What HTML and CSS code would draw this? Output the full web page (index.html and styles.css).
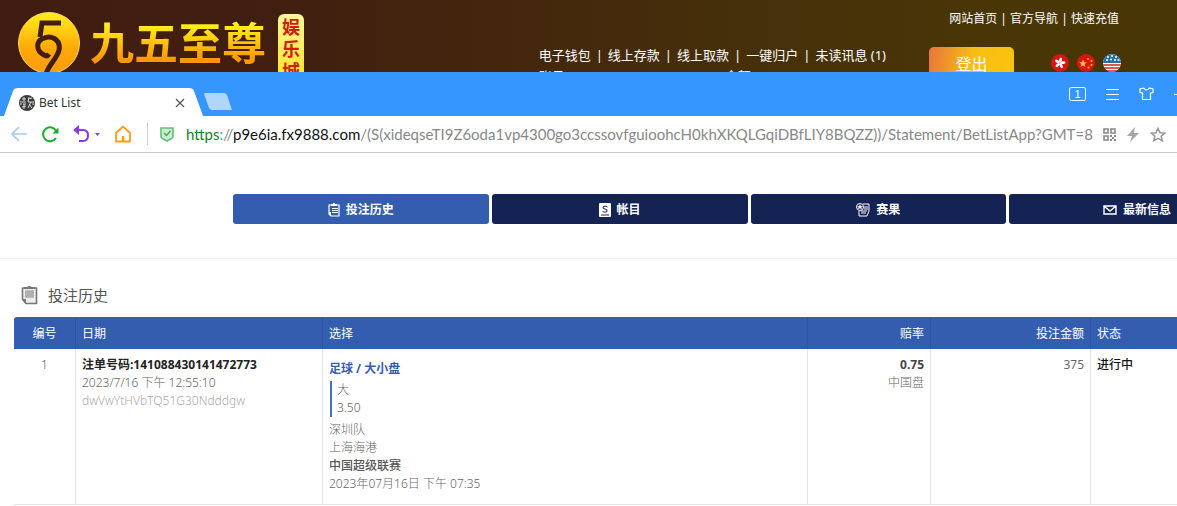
FILE: index.html
```html
<!DOCTYPE html>
<html lang="zh-CN">
<head>
  <meta charset="UTF-8" />
  <meta name="viewport" content="width=device-width, initial-scale=1" />
  <title>Bet List</title>
  <link rel="stylesheet" href="styles.css">
</head>
<body>
  <!-- Site header -->
  <header class="site-header">
    <div class="logo">
      <svg class="logo-mark" width="64" height="64" viewBox="0 0 64 64" aria-hidden="true">
        <defs>
          <linearGradient id="gold" x1="0" y1="0" x2="0" y2="1">
            <stop offset="0" stop-color="#ffef1c" />
            <stop offset="0.6" stop-color="#ffa808" />
            <stop offset="1" stop-color="#ff9a10" />
          </linearGradient>
        </defs>
        <circle cx="31" cy="32" r="30.5" fill="url(#gold)" stroke="#ffd65a" stroke-width="1" />
        <path d="M43 12H24L22 26" fill="none" stroke="#421d10" stroke-width="5" />
        <path d="M31 43Q29 46 26 44C18 40 18 31 24 28C32 23 43 28 41 39C39 48 31 53 28 63" fill="none" stroke="#421d10" stroke-width="5" />
      </svg>
      <span class="logo-name">九五至尊</span>
      <span class="logo-badge">娱乐城</span>
    </div>
    <div class="header-right">
      <nav class="top-links">
        <a href="#">网站首页</a> | <a href="#">官方导航</a> | <a href="#">快速充值</a>
      </nav>
      <div class="account-row">
        <div class="account">
          <nav class="account-links">
            <a href="#">电子钱包</a><span>|</span><a href="#">线上存款</a><span>|</span><a href="#">线上取款</a><span>|</span><a href="#">一键归户</a><span>|</span><a href="#">未读讯息 (1)</a>
          </nav>
          <div class="account-info"><span>账号</span><span>余额</span></div>
        </div>
        <button class="logout" type="button">登出</button>
        <div class="flags">
          <a href="#" aria-label="香港">
            <svg width="18" height="18" viewBox="0 0 18 18">
              <circle cx="9" cy="9" r="9" fill="#d91512" />
              <g fill="#fff">
                <ellipse cx="9" cy="6" rx="1.4" ry="2.6" transform="rotate(12 9 9)" />
                <ellipse cx="9" cy="6" rx="1.4" ry="2.6" transform="rotate(84 9 9)" />
                <ellipse cx="9" cy="6" rx="1.4" ry="2.6" transform="rotate(156 9 9)" />
                <ellipse cx="9" cy="6" rx="1.4" ry="2.6" transform="rotate(228 9 9)" />
                <ellipse cx="9" cy="6" rx="1.4" ry="2.6" transform="rotate(300 9 9)" />
              </g>
            </svg>
          </a>
          <a href="#" aria-label="中国">
            <svg width="18" height="18" viewBox="0 0 18 18">
              <circle cx="9" cy="9" r="9" fill="#d91512" />
              <g fill="#ffc83d">
                <path d="M6 5.5L7 8.3H10L7.6 10L8.5 13L6 11.2L3.5 13L4.4 10L2 8.3H5Z" />
                <circle cx="11" cy="5" r="1" />
                <circle cx="14.500" cy="7" r="1" />
                <circle cx="14.500" cy="11" r="1" />
                <circle cx="11.500" cy="13.500" r="1" />
              </g>
            </svg>
          </a>
          <a href="#" aria-label="English">
            <svg width="18" height="18" viewBox="0 0 18 18">
              <clipPath id="round"><circle cx="9" cy="9" r="9" /></clipPath>
              <g clip-path="url(#round)">
                <rect width="18" height="18" fill="#fff" />
                <rect width="18" height="9" fill="#2372a8" />
                <path d="M0 11H18M0 14H18M0 17H18" stroke="#d8201c" stroke-width="1.500" />
                <path d="M4 3h2M8 2h2M12 3h2M3 6h2M7 5.500h2M11 6h2M14.500 6h2" stroke="#fff" stroke-width="1.500" />
              </g>
            </svg>
          </a>
        </div>
      </div>
    </div>
  </header>

  <!-- Browser window -->
  <div class="browser">
    <div class="tab-strip">
      <div class="tab">
        <svg class="tab-shape" viewBox="0 0 199 28" preserveAspectRatio="none" aria-hidden="true">
          <path d="M0 28L9 3Q10 0 14 0H185Q189 0 190 3L199 28Z" fill="#fff" />
        </svg>
        <svg width="16" height="16" viewBox="0 0 16 16" aria-hidden="true">
          <circle cx="8" cy="8" r="8" fill="#3c3c3c" />
          <path d="M3 4H7M5 2V6M3 7H7M4 9H7M5 9V14M3 12L7 11M9 4L13 3M10 2L9 7M9 7H13M12 7L9 13M10 9L13 13M2 10V6M14 6V10" stroke="#ddd" fill="none" />
        </svg>
        <span class="tab-title">Bet List</span>
        <button class="icon-btn" type="button" aria-label="Close tab">
          <svg width="10" height="10" viewBox="0 0 10 10"><path d="M1 1L9 9M9 1L1 9" stroke="#555" stroke-width="1.200" /></svg>
        </button>
      </div>
      <button class="icon-btn new-tab" type="button" aria-label="New tab">
        <svg width="28" height="17" viewBox="0 0 28 17"><path d="M1 0H20Q22 0 23 2L28 17H8Q6 17 5 15L0 1Z" fill="#b0d6fd" /></svg>
      </button>
      <div class="window-tools">
        <button class="icon-btn" type="button"><span class="window-count">1</span></button>
        <button class="icon-btn" type="button" aria-label="Menu">
          <svg width="13" height="12" viewBox="0 0 13 12"><path d="M0 1.500H13M0 6.500H13M0 11.500H13" stroke="#fff" /></svg>
        </button>
        <button class="icon-btn" type="button" aria-label="Skins">
          <svg width="15" height="14" viewBox="0 0 15 14"><path d="M4.500 1L1 2V5.500L3.500 6V12.500H11.500V6L14 5.500V2L10.500 1Q7.500 5 4.500 1Z" fill="none" stroke="#fff" stroke-width="1.200" /></svg>
        </button>
        <button class="icon-btn" type="button" aria-label="Minimize">
          <svg width="12" height="12" viewBox="0 0 12 12"><path d="M0 6.500H12" stroke="#fff" /></svg>
        </button>
      </div>
    </div>

    <div class="toolbar">
      <button class="icon-btn" type="button" aria-label="Back">
        <svg width="16" height="16" viewBox="0 0 16 16"><path d="M16 8H1M8 1L1 8L8 15" fill="none" stroke="#a5cbf3" stroke-width="1.600" /></svg>
      </button>
      <button class="icon-btn" type="button" aria-label="Reload">
        <svg width="18" height="18" viewBox="0 0 18 18"><path d="M15 13A7 7 0 1 1 15.300 6" fill="none" stroke="#16ad2c" stroke-width="2" /><path d="M17.500 2.500V8.500H11.500Z" fill="#16ad2c" /></svg>
      </button>
      <button class="icon-btn" type="button" aria-label="Undo">
        <svg width="28" height="18" viewBox="0 0 28 18"><path d="M3 5H10Q15 5 15 10.500Q15 16 10 16H6" fill="none" stroke="#8a3be0" stroke-width="2" /><path d="M0 5L6 0V10Z" fill="#8a3be0" /><path d="M22 8H27L24.500 11Z" fill="#8a3be0" /></svg>
      </button>
      <button class="icon-btn" type="button" aria-label="Home">
        <svg width="16" height="18" viewBox="0 0 16 18"><path d="M1 8L8 1.500L15 8V16.500H1Z" fill="none" stroke="#ff9c1a" stroke-width="1.800" stroke-linejoin="round" /><path d="M8 16V11" stroke="#ff9c1a" stroke-width="2.500" /></svg>
      </button>
      <div class="address">
        <svg width="14" height="16" viewBox="0 0 14 16" aria-hidden="true"><path d="M1 2H13V11Q13 12 7 15Q1 12 1 11Z" fill="#c8efcf" stroke="#63bd75" stroke-width="1.600" /><path d="M4 7L6.500 9.500L10.500 5" fill="none" stroke="#44a85a" stroke-width="1.500" /></svg>
        <div class="url" role="textbox" contenteditable="true" spellcheck="false" aria-label="Address"><span class="url-scheme">https</span>://<span class="url-host">p9e6ia.fx9888.com</span>/(S(xideqseTI9Z6oda1vp4300go3ccssovfguioohcH0khXKQLGqiDBfLIY8BQZZ))/Statement/BetListApp?GMT=8</div>
      </div>
      <div class="page-tools">
        <button class="icon-btn" type="button" aria-label="QR code">
          <svg width="13" height="13" viewBox="0 0 13 13"><path d="M1 1H5V5H1ZM8 1H12V5H8ZM1 8H5V12H1Z" fill="none" stroke="#888" stroke-width="1.600" /><path d="M7 7H9V9H7ZM11 7H13V9H11ZM9 9H11V11H9ZM7 11H9V13H7ZM11 11H13V13H11Z" fill="#888" /></svg>
        </button>
        <button class="icon-btn" type="button" aria-label="Speed mode">
          <svg width="12" height="15" viewBox="0 0 12 15"><path d="M8 0L0 9H5L3 15L12 6H7Z" fill="#a5a5a5" /></svg>
        </button>
        <button class="icon-btn" type="button" aria-label="Bookmark">
          <svg width="16" height="15" viewBox="0 0 16 15"><path d="M8 1.500L10 5.700L14.600 6.200L11.200 9.200L12.200 13.700L8 11.400L3.800 13.700L4.800 9.200L1.400 6.200L6 5.700Z" fill="none" stroke="#999" stroke-width="1.600" /></svg>
        </button>
      </div>
    </div>
  </div>

  <!-- Bet list page -->
  <main class="page">
    <nav class="menu">
      <a class="menu-item active" href="#">
        <svg width="12" height="14" viewBox="0 0 12 14" aria-hidden="true"><path d="M3 2H1V11L3 13H11V2H9" fill="none" stroke="#fff" stroke-width="1.200" /><path d="M3 3V1H5V0H7V1H9V3ZM4 5H10V6H4ZM4 7H10V8H4ZM4 9H10V10H4ZM1 9H3V13H2L1 11Z" fill="#fff" /></svg>
        投注历史
      </a>
      <a class="menu-item" href="#">
        <svg width="12" height="14" viewBox="0 0 12 14" aria-hidden="true"><rect width="12" height="14" rx="1" fill="#fff" /><path d="M8.500 4Q6 2 4 4Q3.500 6 6 6Q9 6.500 8 8.500Q6 10 3.500 8.500M2 12H10" fill="none" stroke="#142254" /></svg>
        帐目
      </a>
      <a class="menu-item" href="#">
        <svg width="14" height="14" viewBox="0 0 14 14" aria-hidden="true"><path d="M7 1H13V8L11 13H3V8M8 4H12M8 6H12M5 8H11M5 10H10" fill="none" stroke="#fff" /><circle cx="4" cy="4" r="3.500" fill="none" stroke="#fff" /><path d="M4 1.500L5 3.300H7L5.300 4.500L6 6.500L4 5.300L2 6.500L2.700 4.500L1 3.300H3Z" fill="#fff" /></svg>
        赛果
      </a>
      <a class="menu-item" href="#">
        <svg width="14" height="10" viewBox="0 0 14 10" aria-hidden="true"><path d="M1 1H13V9H1ZM1 1L7 6L13 1" fill="none" stroke="#fff" stroke-width="1.400" /></svg>
        最新信息
      </a>
    </nav>

    <section class="history">
      <h1 class="history-title">
        <svg width="17" height="20" viewBox="0 0 17 20" aria-hidden="true"><path d="M3 3H1.500V14L5 18.500H15.500V3H14" fill="#eee" stroke="#777" stroke-width="1.600" stroke-linejoin="round" /><path d="M3 4V2H6Q8 0 11 2H14V4Z" fill="#777" /><path d="M4 5H13V13H4Z" fill="#bbb" /><path d="M4 7H13M4 9H13M4 11H13" stroke="#a2a2a2" /><path d="M1 14H5V19L1 15Z" fill="#777" /></svg>
        投注历史
      </h1>
      <table class="bets">
        <colgroup>
          <col class="col-no"><col class="col-date"><col class="col-pick"><col class="col-odds"><col class="col-stake"><col>
        </colgroup>
        <thead>
          <tr>
            <th class="center">编号</th>
            <th>日期</th>
            <th>选择</th>
            <th class="right">赔率</th>
            <th class="right">投注金额</th>
            <th>状态</th>
          </tr>
        </thead>
        <tbody>
          <tr>
            <td class="center">1</td>
            <td>
              <div class="ticket">注单号码:141088430141472773</div>
              <div>2023/7/16 下午 12:55:10</div>
              <div class="user">dwVwYtHVbTQ51G30Ndddgw</div>
            </td>
            <td class="pick">
              <div class="market">足球 / 大小盘</div>
              <div class="selection">
                <div>大</div>
                <div>3.50</div>
              </div>
              <div>深圳队</div>
              <div>上海海港</div>
              <div class="league">中国超级联赛</div>
              <div>2023年07月16日 下午 07:35</div>
            </td>
            <td class="right">
              <div class="odds">0.75</div>
              <div>中国盘</div>
            </td>
            <td class="right stake">375</td>
            <td class="status">进行中</td>
          </tr>
        </tbody>
      </table>
    </section>
  </main>
</body>
</html>
```
FILE: styles.css
```css
* {
  box-sizing: border-box;
}
body {
  margin: 0;
  background: #fff;
  font-family: "Noto Sans", "Noto Sans CJK SC", sans-serif;
  font-size: 12px;
  line-height: 18px;
  color: #666;
  overflow: hidden;
}
a {
  color: inherit;
  text-decoration: none;
}
svg {
  display: block;
  flex: none;
}
.icon-btn {
  display: flex;
  flex: none;
  padding: 0;
  border: none;
  background: none;
  cursor: pointer;
}

/* Site header */
.site-header {
  display: flex;
  justify-content: space-between;
  max-height: 72px;
  padding: 8px 56px 0 18px;
  overflow: hidden;
  background: linear-gradient(to right, #401c12, #42200f 28%, #46300a 65%, #493606 85%, #483605);
  color: #fff;
}
.logo {
  display: flex;
  align-items: flex-start;
}
.logo-mark {
  margin-top: 3px;
}
.logo-name {
  margin: 10px 12px 0 8px;
  font-family: "Noto Sans CJK SC", sans-serif;
  font-size: 44px;
  font-weight: 700;
  line-height: 46px;
  background: linear-gradient(#fff019 15%, #ff9800 90%);
  -webkit-background-clip: text;
  background-clip: text;
  color: transparent;
}
.logo-badge {
  width: 26px;
  margin-top: 6px;
  padding: 2px 4px;
  border-radius: 6px;
  background: linear-gradient(#fff79a, #ffe11e);
  color: #d0200c;
  font-size: 18px;
  font-weight: 700;
  line-height: 22px;
}
.header-right {
  display: flex;
  flex-direction: column;
  align-items: flex-end;
}
.top-links {
  padding-right: 2px;
  line-height: 22px;
}
.account-row {
  display: flex;
  align-items: flex-start;
  margin-top: 16px;
}
.account {
  margin-right: 43px;
  font-size: 13px;
  line-height: 18px;
}
.account-links {
  display: flex;
  gap: 5px;
}
.account-info {
  display: flex;
  gap: 160px;
  line-height: 24px;
}
.logout {
  width: 85px;
  height: 32px;
  margin-top: 1px;
  padding: 0;
  border: none;
  border-radius: 5px;
  background: linear-gradient(100deg, #e8743b, #f7bd17 50%, #fac40c);
  color: #fff;
  font-family: inherit;
  font-size: 16px;
}
.flags {
  display: flex;
  gap: 8px;
  margin: 8px 0 0 37px;
}

/* Browser window */
.tab-strip {
  display: flex;
  align-items: flex-end;
  height: 44px;
  padding-left: 4px;
  overflow: hidden;
  background: #3596ff;
}
.tab {
  position: relative;
  display: flex;
  align-items: center;
  width: 199px;
  height: 28px;
  padding: 2px 18px 0 15px;
  color: #333;
}
.tab-shape {
  position: absolute;
  inset: 0;
  width: 100%;
  height: 100%;
}
.tab > :not(.tab-shape) {
  z-index: 1;
}
.tab-title {
  flex: 1;
  margin-left: 4px;
}
.new-tab {
  margin: 0 0 6px 1px;
}
.window-tools {
  display: flex;
  align-items: center;
  gap: 20px;
  height: 44px;
  margin-left: auto;
  margin-right: -9px;
}
.window-count {
  width: 17px;
  border: 1px solid #fff;
  border-radius: 2px;
  color: #fff;
  font-size: 11px;
  line-height: 12px;
}
.toolbar {
  display: flex;
  align-items: center;
  gap: 14px;
  height: 37px;
  padding: 0 11px;
  border-bottom: 1px solid #c8c8c8;
}
.address {
  display: flex;
  flex: 1;
  align-items: center;
  gap: 12px;
  min-width: 0;
  margin: 0 -8px 0 2px;
  padding-left: 12px;
  border-left: 1px solid #ccc;
}
.url {
  min-width: 0;
  overflow: hidden;
  color: #888;
  font-family: Lato, "Noto Sans", sans-serif;
  font-size: 15px;
  line-height: 22px;
  white-space: nowrap;
}
.url-scheme {
  color: #16801d;
}
.url-host {
  color: #111;
}
.page-tools {
  display: flex;
  align-items: center;
  gap: 11px;
}

/* Bet list page */
.page {
  min-width: 1498px;
}
.menu {
  display: flex;
  justify-content: center;
  gap: 3px;
  padding: 41px 233px 34px;
  border-bottom: 1px solid #f3f3f3;
}
.menu-item {
  display: flex;
  flex: 1;
  align-items: center;
  justify-content: center;
  gap: 6px;
  height: 30px;
  padding-top: 2px;
  border-radius: 3px;
  background: #142254;
  color: #fff;
  font-weight: bold;
}
.menu-item.active {
  background: #345db0;
}
.history {
  padding: 24px 14px;
}
.history-title {
  display: flex;
  align-items: center;
  gap: 10px;
  margin: 0;
  padding: 0 7px 10px;
  font-size: 15px;
  font-weight: normal;
  line-height: 24px;
  color: #555;
}
.bets {
  width: 100%;
  table-layout: fixed;
  border-collapse: separate;
  border-spacing: 0;
}
.col-no {
  width: 62px;
}
.col-date {
  width: 247px;
}
.col-pick {
  width: 485px;
}
.col-odds {
  width: 123px;
}
.col-stake {
  width: 160px;
}
.bets th {
  padding: 8px 6px 6px;
  border-right: 1px solid #2e54a3;
  background: #345db0;
  color: #fff;
  font-weight: normal;
  text-align: left;
}
.bets th:first-child {
  border-top-left-radius: 3px;
}
.bets td {
  padding: 7px 6px;
  border-right: 1px solid #e3e5ea;
  border-bottom: 1px solid #e3e5ea;
  font-weight: 300;
  vertical-align: top;
}
.bets .center {
  text-align: center;
}
.bets .right {
  text-align: right;
}
.bets .pick {
  padding-top: 11px;
  padding-bottom: 11px;
}
.ticket {
  color: #222;
  font-weight: bold;
}
.user {
  color: #aaa;
}
.market {
  color: #345db0;
  font-weight: bold;
}
.selection {
  margin: 3px 0 4px 1px;
  padding-left: 5px;
  border-left: 2px solid #4472c4;
}
.bets .league {
  color: #555;
  font-weight: 500;
}
.odds {
  color: #444;
  font-weight: bold;
}
.bets .stake {
  font-weight: normal;
}
.bets .status {
  color: #111;
  font-weight: 500;
}
```
